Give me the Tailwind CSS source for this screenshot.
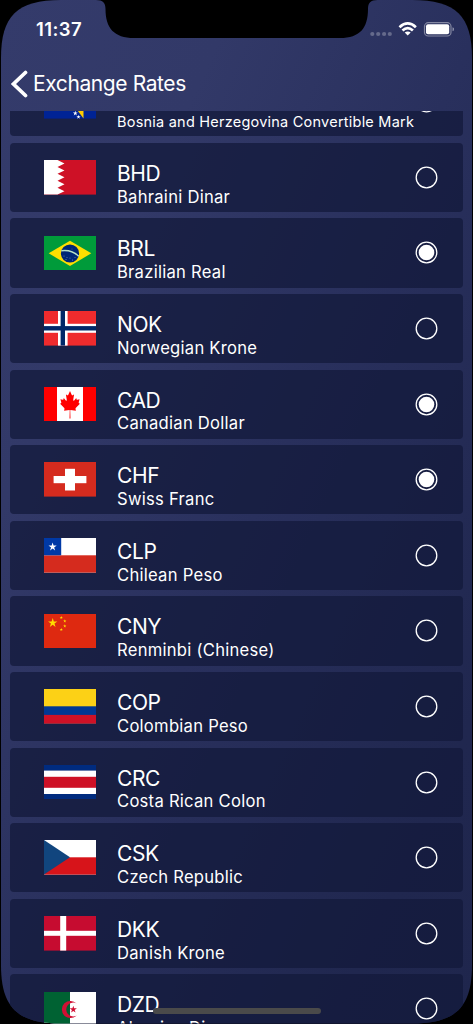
<!DOCTYPE html>
<html lang="en">
<head>
<meta charset="utf-8">
<title>Exchange Rates</title>
<script src="https://cdn.jsdelivr.net/npm/@tailwindcss/browser@4"></script>
</head>
<body class="bg-black">
<main class="relative mx-px flex h-[1024px] w-[471px] flex-col overflow-hidden bg-[linear-gradient(to_bottom_right,#343b6b_0%,#323968_25%,#29305d_52%,#20274f_85%,#1f264d_100%)] font-['Inter',sans-serif] text-white [clip-path:path('M0_58C0_16_16_0_60_0H411C455_0_471_16_471_58V965C471_1007_455_1023.5_411_1023.5H60C16_1023.5_0_1007_0_965Z')]">
  <svg class="absolute left-0 top-0" width="471" height="40" viewBox="1 0 471 40"><path d="M96 0C103 0 105.500 3 105.500 9C105.500 28 114 38 134 38H340C360 38 368 28 368 9C368 3 370.500 0 377.500 0Z" fill="#000"/></svg>
  <header class="flex h-14 shrink-0 items-start justify-between pl-[35px] pr-[18px]">
    <time class="mt-[17px] text-[18.500px] font-semibold leading-6 tracking-[0.400px]">11:37</time>
    <svg class="mt-5" width="86" height="20" viewBox="368 20 86 20">
      <g fill="#fff" fill-opacity=".27"><circle cx="372.300" cy="34" r="2.100"/><circle cx="378.200" cy="34" r="2.100"/><circle cx="384.100" cy="34" r="2.100"/><circle cx="389.800" cy="34" r="2.100"/></g>
      <g fill="none" stroke="#fff" stroke-width="2.700"><path d="M399.500 27.200Q407.700 19.700 415.900 27.200"/><path d="M402.500 30.500Q407.700 25.700 412.900 30.500"/></g>
      <path d="M407.700 35.600L404.700 32.600Q407.700 30.200 410.700 32.600Z" fill="#fff"/>
      <rect x="424.500" y="22.700" width="26.500" height="13.300" rx="3.800" fill="none" stroke="#fff" stroke-opacity=".42" stroke-width="1.200"/>
      <rect x="426" y="24.300" width="23.200" height="9.900" rx="2" fill="#fff"/>
      <path d="M452.500 27.200Q454.300 28 454.300 29.200Q454.300 30.600 452.500 31.300Z" fill="#fff" fill-opacity=".45"/>
    </svg>
  </header>
  <nav class="flex h-[55px] shrink-0 items-center gap-[5px] pl-[10px]">
    <svg width="17" height="28" viewBox="0 0 17 28"><path d="M14.500 2.500L2.500 14L14.500 25.500" fill="none" stroke="#fff" stroke-width="3.700" stroke-linecap="round"/></svg>
    <h1 class="mt-px text-[21px] font-normal leading-6 tracking-[-0.400px]">Exchange Rates</h1>
  </nav>
  <section class="h-[913px] overflow-hidden px-[9px]">
    <ul id="list" class="-mt-[43.8px] flex flex-col gap-[6.42px]"></ul>
  </section>
  <div class="absolute left-[151.500px] top-[1007.500px] h-[6.500px] w-[168.500px] rounded-full bg-[#4a4a4a]"></div>
</main>
<script>
const star = (cx, cy, r, fill) => {
  const p = [];
  for (let i = 0; i < 10; i++) {
    const a = -Math.PI / 2 + i * Math.PI / 5, q = i % 2 ? r * .382 : r;
    p.push((cx + q * Math.cos(a)).toFixed(2) + ',' + (cy + q * Math.sin(a)).toFixed(2));
  }
  return `<polygon points="${p.join(' ')}" fill="${fill}"/>`;
};
const bg = c => `<rect width="52" height="34.6" fill="${c}"/>`;
const bar = (x, y, w, h, c) => `<rect x="${x}" y="${y}" width="${w}" height="${h}" fill="${c}"/>`;
const flags = {
  BAM: bg('#002395') + '<path d="M14 0H39.500V34.600Z" fill="#fecb00"/>' + star(27.5, 25.5, 2, '#fff') + star(31.3, 29.3, 2.6, '#fff') + star(34.5, 33, 2.2, '#fff'),
  BHD: bg('#ce1126') + '<path d="M0 0H13.500L20.500 3.460L13.500 6.920L20.500 10.380L13.500 13.840L20.500 17.300L13.500 20.760L20.500 24.220L13.500 27.680L20.500 31.140L13.500 34.600H0Z" fill="#fff"/>',
  BRL: bg('#009b3a') + '<path d="M4.700 17.300L26 4.700L47.300 17.300L26 30Z" fill="#fedf00"/><circle cx="26" cy="17.500" r="9.100" fill="#002776"/><path d="M17.300 14.700Q27.500 13.300 34.700 20.200" stroke="#b7e1c7" stroke-width="1.400" fill="none"/><g fill="#8593ba"><circle cx="20" cy="20" r=".5"/><circle cx="23" cy="21.500" r=".5"/><circle cx="26" cy="22" r=".5"/><circle cx="28.500" cy="24" r=".5"/><circle cx="31" cy="21.500" r=".5"/><circle cx="22" cy="23.500" r=".5"/><circle cx="28" cy="13" r=".4"/></g>',
  NOK: bg('#ef2b2d') + bar(14, 0, 9.6, 34.6, '#fff') + bar(0, 12.8, 52, 9, '#fff') + bar(16.6, 0, 4.4, 34.6, '#002868') + bar(0, 15.1, 52, 4.4, '#002868'),
  CAD: bg('#fff') + bar(0, 0, 13, 34.6, '#f00') + bar(39, 0, 13, 34.6, '#f00') + '<path d="M26 3.700L23.800 7.700Q23.300 8.300 22.300 7.700L21 7L22 12.400Q22.100 14 20.800 13.200L18.300 10.700L17.800 12Q17.600 12.500 16.900 12.400L14.200 11.900L15.200 14.800Q15.400 15.600 14.800 15.900L13.800 16.400L18.900 20.500Q19.400 21 19.100 21.800L18.700 23.300L25.200 22.500Q25.700 22.500 25.700 23.200L25.400 31H26.600L26.300 23.200Q26.300 22.500 26.800 22.500L33.300 23.300L32.900 21.800Q32.600 21 33.100 20.500L38.200 16.400L37.200 15.900Q36.600 15.600 36.800 14.800L37.800 11.900L35.100 12.400Q34.400 12.500 34.200 12L33.700 10.700L31.200 13.200Q29.900 14 30 12.400L31 7L29.700 7.700Q28.700 8.300 28.200 7.700Z" transform="translate(4.940 .4) scale(.81 1)" fill="#f00"/>',
  CHF: bg('#d52b1e') + bar(9.6, 14, 32.8, 7.2, '#fff') + bar(21, 6.8, 10, 21.7, '#fff'),
  CLP: bg('#fff') + bar(0, 17.3, 52, 17.3, '#d52b1e') + bar(0, 0, 17.2, 17.3, '#0039a6') + star(8.6, 8.9, 4.3, '#fff'),
  CNY: bg('#de2910') + star(8.7, 9, 4.9, '#ffde00') + star(17.3, 3.6, 1.7, '#ffde00') + star(20.8, 7, 1.7, '#ffde00') + star(20.8, 12, 1.7, '#ffde00') + star(17.3, 15.6, 1.7, '#ffde00'),
  COP: bg('#fcd116') + bar(0, 17.3, 52, 17.3, '#003893') + bar(0, 25.9, 52, 8.7, '#ce1126'),
  CRC: bg('#002b7f') + bar(0, 5.6, 52, 23.4, '#fff') + bar(0, 11.8, 52, 11, '#ce1126'),
  CSK: bg('#fff') + bar(0, 17.3, 52, 17.3, '#d7141a') + '<path d="M0 0L26 17.300L0 34.600Z" fill="#11457e"/>',
  DKK: bg('#c60c30') + bar(16.2, 0, 6, 34.6, '#fff') + bar(0, 14.8, 52, 5, '#fff'),
  DZD: bg('#fff') + bar(0, 0, 26, 34.6, '#006233') + '<path d="M32.700 11.600A8.600 8.600 0 1 0 32.700 23.400A6.900 6.900 0 1 1 32.700 11.600Z" fill="#d21034"/>' + star(29.3, 17.5, 3.8, '#d21034')
};
const rows = [
  ['BAM', 'Bosnia and Herzegovina Convertible Mark', 0],
  ['BHD', 'Bahraini Dinar', 0],
  ['BRL', 'Brazilian Real', 1],
  ['NOK', 'Norwegian Krone', 0],
  ['CAD', 'Canadian Dollar', 1],
  ['CHF', 'Swiss Franc', 1],
  ['CLP', 'Chilean Peso', 0],
  ['CNY', 'Renminbi (Chinese)', 0],
  ['COP', 'Colombian Peso', 0],
  ['CRC', 'Costa Rican Colon', 0],
  ['CSK', 'Czech Republic', 0],
  ['DKK', 'Danish Krone', 0],
  ['DZD', 'Algerian Dinar', 0]
];
document.getElementById('list').innerHTML = rows.map(([code, name, on]) => `
  <li class="flex h-[69.2px] shrink-0 items-start rounded-[4px] bg-[#131a3b]/75 pl-[34px] pr-[24.600px]">
    <svg class="mt-[17.200px] shrink-0" width="52" height="34.6" viewBox="0 0 52 34.6">${flags[code]}</svg>
    <div class="ml-[21px] w-0 grow whitespace-nowrap pt-[19.100px]">
      <div class="text-[21px] font-normal leading-6 tracking-[-0.400px]">${code}</div>
      <div class="${name.length > 30 ? '-mt-[0.300px] text-[14.500px] tracking-[0.230px]' : '-mt-[1.300px] text-[16.600px] tracking-[0.260px]'} font-normal leading-6">${name}</div>
    </div>
    <svg class="mt-[23px] shrink-0" width="23" height="23" viewBox="0 0 23 23"><circle cx="11.5" cy="11.5" r="10.3" fill="none" stroke="#fff" stroke-width="1.3"/>${on ? '<circle cx="11.5" cy="11.5" r="7.8" fill="#fff"/>' : ''}</svg>
  </li>`).join('');
</script>
</body>
</html>
